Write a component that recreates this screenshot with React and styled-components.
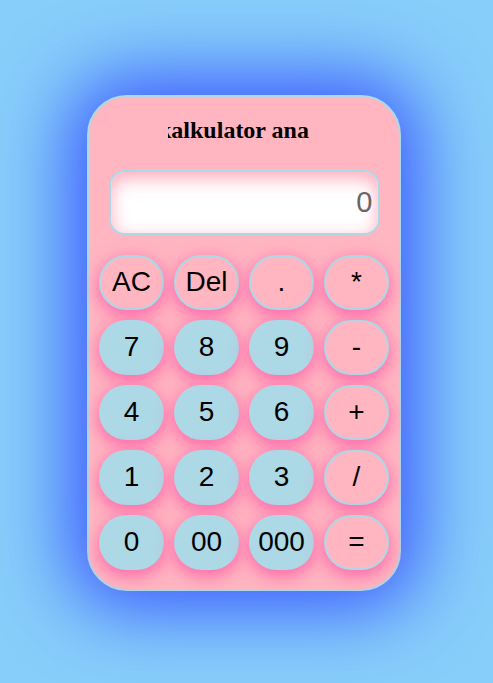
import React from 'react';
import styled, { createGlobalStyle } from 'styled-components';

const GlobalStyle = createGlobalStyle`
    html, body {
        margin: 0;
        padding: 0;
        height: 100%;
    }
    body {
        background-color: #87cefa;
        font-family: "Liberation Sans", Arial, sans-serif;
    }
    #root {
        height: 100%;
    }
`

const Page = styled.div`
    height: 100%;
    display: flex;
    align-items: center;
    justify-content: center;
    padding: 2px 5px 0 0;
    box-sizing: border-box;
`

const Card = styled.div`
    width: 314px;
    height: 496px;
    box-sizing: border-box;
    border: 2px solid #add8e6;
    border-radius: 40px;
    background-color: #ffb6c1;
    box-shadow: 0 0 75px 18px #3a58ff;
    padding: 19px 10px 18px 10px;
    display: flex;
    flex-direction: column;
    align-items: center;
`

const TitleWindow = styled.div`
    align-self: flex-start;
    margin-left: 69px;
    width: 200px;
    overflow: hidden;
    height: 28px;
`

const Title = styled.h1`
    margin: 0 0 0 -10px;
    font-family: "Liberation Serif", "Times New Roman", serif;
    font-size: 24px;
    line-height: 28px;
    font-weight: bold;
    white-space: nowrap;
    color: #000;
`

const Display = styled.div`
    margin-top: 26px;
    width: 271px;
    height: 65px;
    box-sizing: border-box;
    border: 2px solid #add8e6;
    border-radius: 16px;
    background-color: #fff;
    box-shadow: inset 0 6px 18px #ffaabb;
    display: flex;
    align-items: center;
    justify-content: flex-end;
    padding-right: 5px;
    font-size: 29px;
    color: #666;
`

const Keys = styled.div`
    margin-top: 20px;
    display: grid;
    grid-template-columns: repeat(4, 65px);
    grid-auto-rows: 55px;
    gap: 10px;
`

const Key = styled.button`
    width: 65px;
    height: 55px;
    box-sizing: border-box;
    border-radius: 30px;
    border: 2px solid ${p => p.$operator ? '#add8e6' : 'transparent'};
    background-color: ${p => p.$operator ? '#ffb6c1' : '#add8e6'};
    box-shadow: 0 5px 18px #ff5fa8;
    font-family: "Liberation Sans", Arial, sans-serif;
    font-size: 28px;
    color: #000;
    padding: 0;
    display: flex;
    align-items: center;
    justify-content: center;
    cursor: pointer;
`

const keys = [
    ['AC', true], ['Del', true], ['.', true], ['*', true],
    ['7'], ['8'], ['9'], ['-', true],
    ['4'], ['5'], ['6'], ['+', true],
    ['1'], ['2'], ['3'], ['/', true],
    ['0'], ['00'], ['000'], ['=', true],
]

const App = () => {
    return <>
        <GlobalStyle />
        <Page>
            <Card>
                <TitleWindow>
                    <Title>kalkulator ana</Title>
                </TitleWindow>
                <Display>0</Display>
                <Keys>
                    {keys.map(([label, op]) => (
                        <Key key={label} $operator={op}>{label}</Key>
                    ))}
                </Keys>
            </Card>
        </Page>
    </>
}

export default App;
